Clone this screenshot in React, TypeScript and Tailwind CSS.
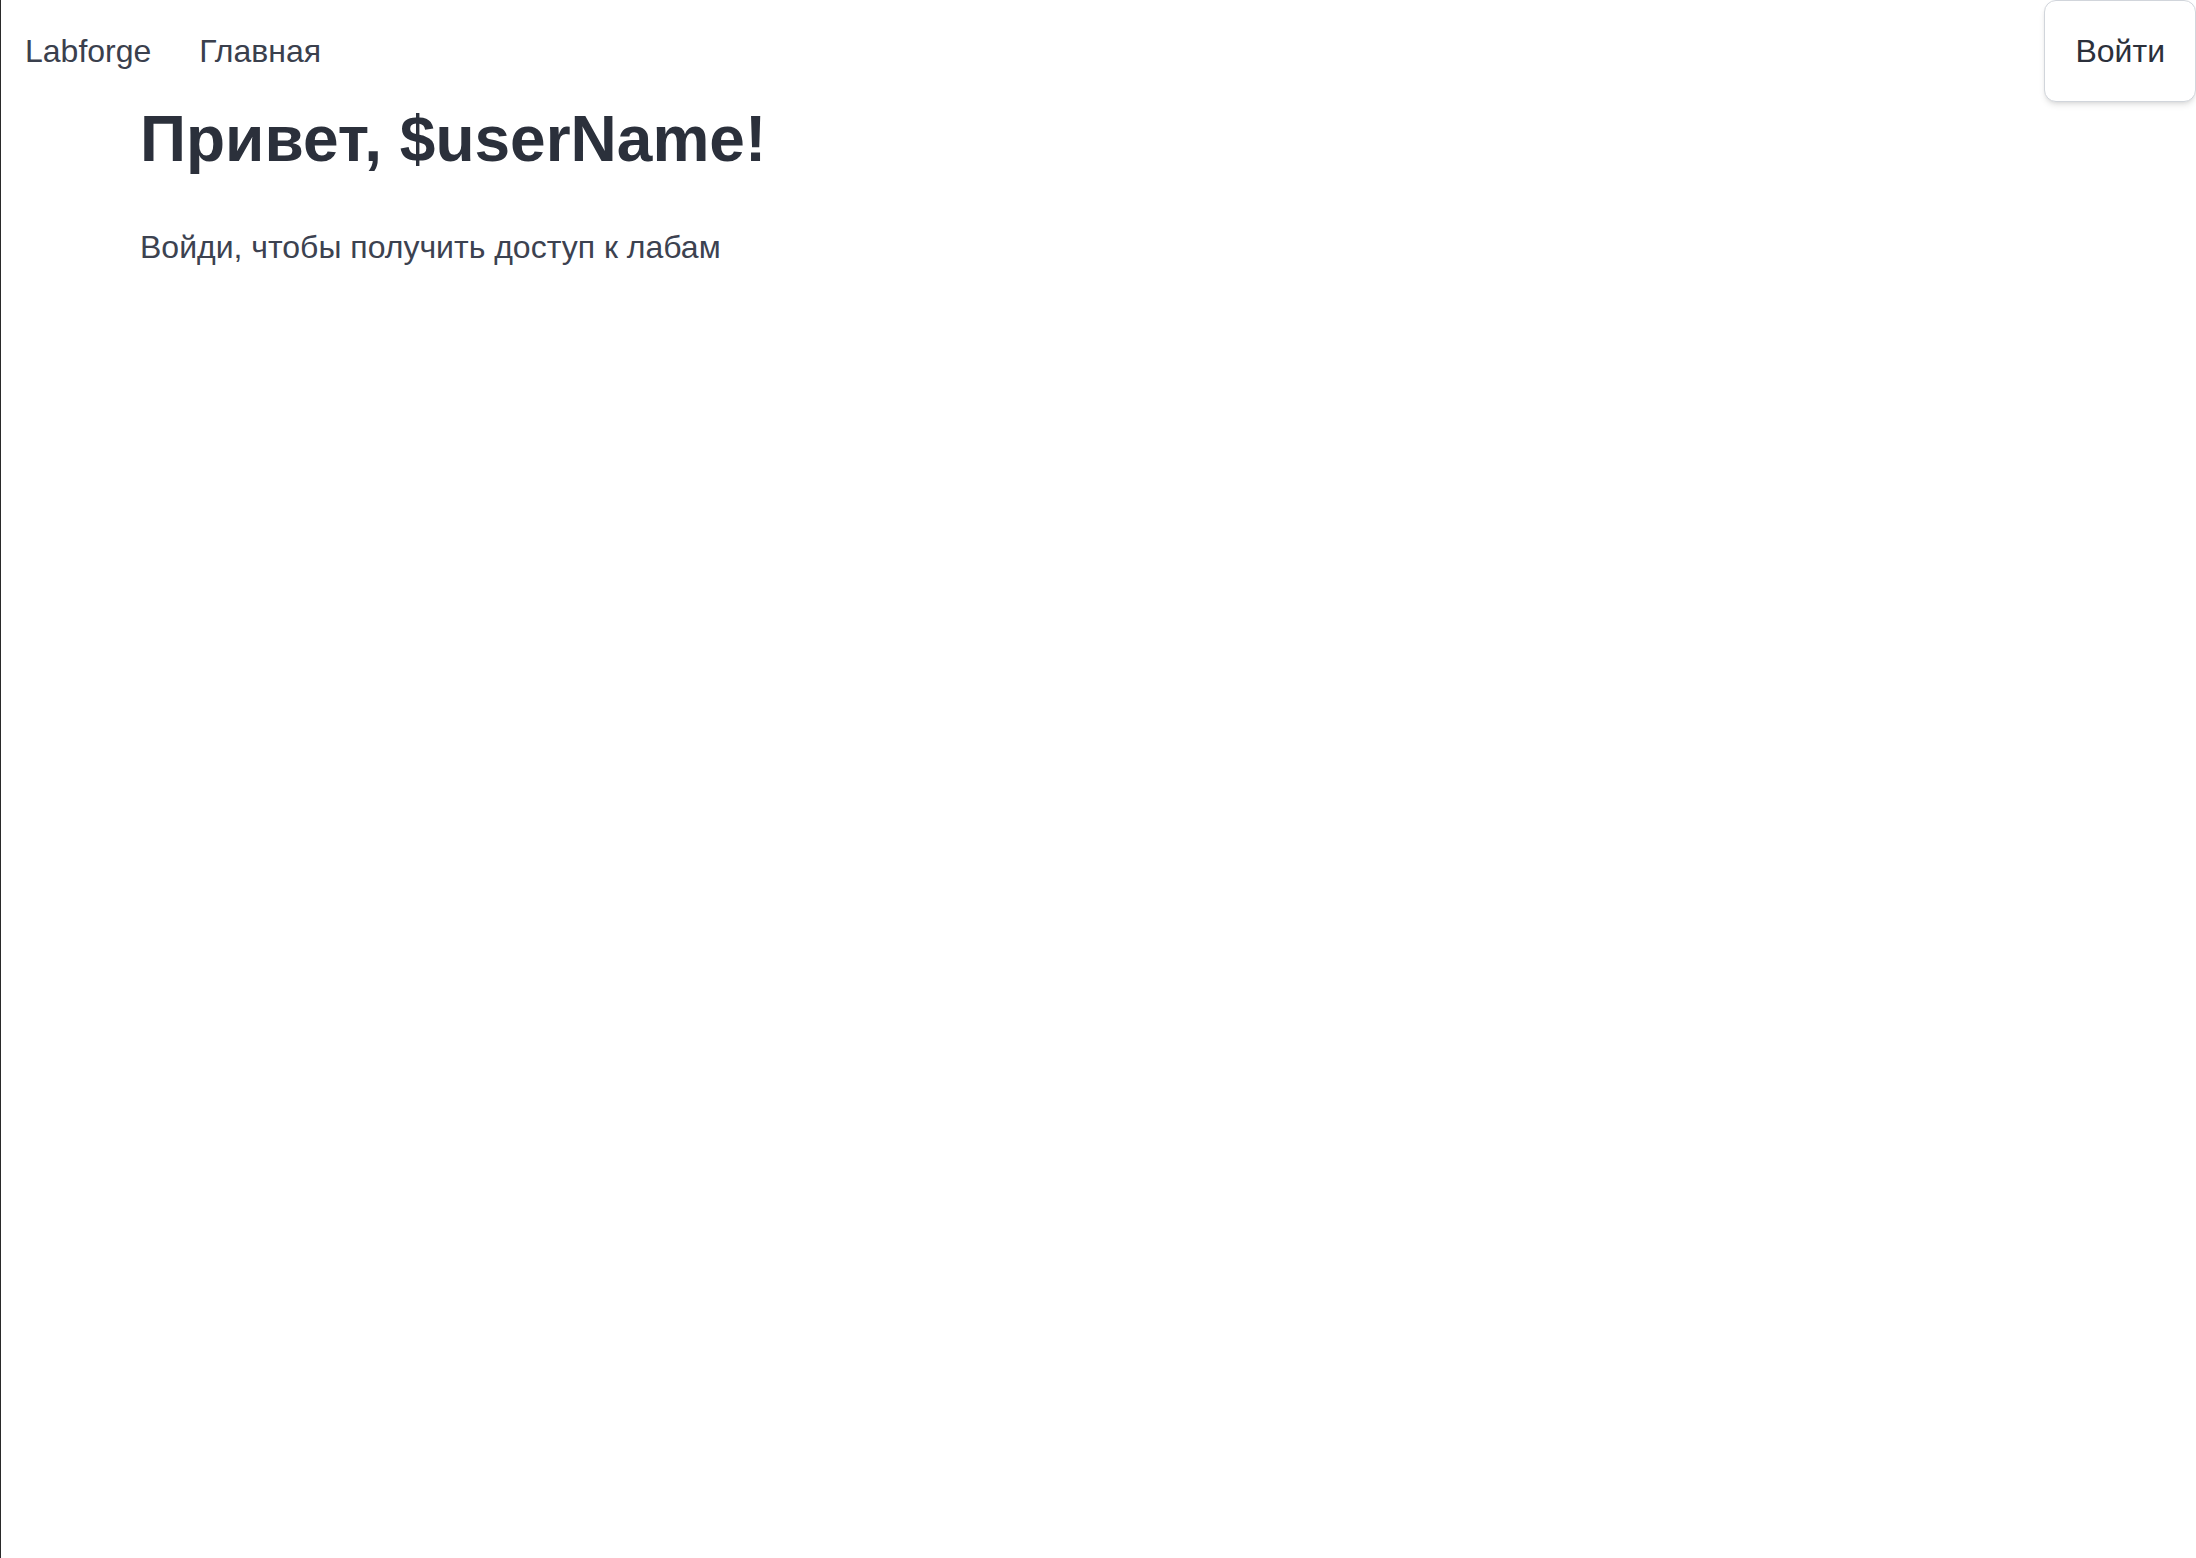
export default function App() {
  return (
    <div
      className="min-h-screen bg-white border-l border-[#2a2a2a]"
      style={{ fontFamily: '"Liberation Sans", Arial, sans-serif' }}
    >
      {/* Top nav */}
      <nav className="flex items-center justify-between">
        <div className="flex items-center gap-[48px] pl-6 text-[32px] text-[#3a404d]">
          <a href="#">Labforge</a>
          <a href="#">Главная</a>
        </div>
        <button className="px-[30px] py-[26px] text-[32px] text-[#2b303b] bg-white border border-[#d1d5db] rounded-xl shadow-md">
          Войти
        </button>
      </nav>

      {/* Content */}
      <main className="pl-[139px]">
        <h1 className="mt-[5px] text-[64px] leading-[64px] font-bold text-[#2b303b]">
          Привет, $userName!
        </h1>
        <p className="mt-[52px] text-[32px] text-[#3c4250]">
          Войди, чтобы получить доступ к лабам
        </p>
      </main>
    </div>
  )
}
